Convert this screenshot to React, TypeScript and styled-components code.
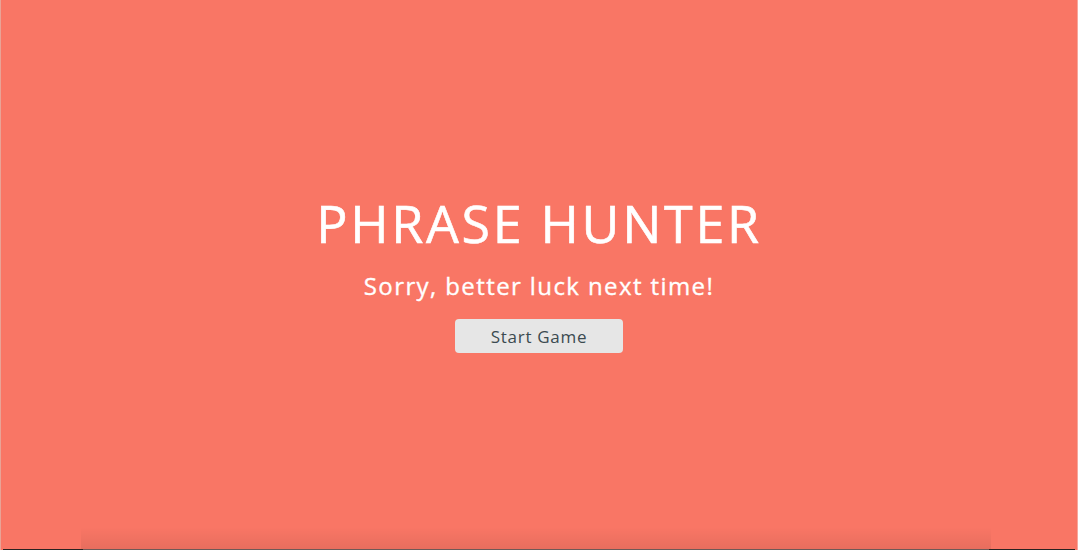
import React from "react";
import styled, { createGlobalStyle } from "styled-components";

const GlobalStyle = createGlobalStyle`
  html, body {
    margin: 0;
    padding: 0;
    height: 100%;
    overflow: hidden;
  }
  #root {
    height: 100%;
  }
`;

const Overlay = styled.div<{ $bg: string }>`
  position: relative;
  box-sizing: border-box;
  height: 100vh;
  width: 100vw;
  background: ${(p) => p.$bg};
  display: flex;
  flex-direction: column;
  align-items: center;
  justify-content: center;
  font-family: "Open Sans", "DejaVu Sans", sans-serif;
  color: #ffffff;
  border-left: 1px solid #e9a396;
  border-right: 1px solid #f7a79c;
  padding-bottom: 5px;
`;

const Title = styled.h2`
  margin: 0 0 6px;
  font-size: 52px;
  font-weight: 400;
  letter-spacing: 2.7px;
  line-height: 1.2;
  -webkit-text-stroke: 0.6px #ffffff;
`;

const Message = styled.h1`
  margin: 10px 0 0;
  font-size: 24px;
  font-weight: 400;
  letter-spacing: 1.4px;
  line-height: 1.3;
  -webkit-text-stroke: 0.35px #ffffff;
`;

const StartButton = styled.button`
  margin-top: 18px;
  width: 168px;
  height: 34px;
  border: none;
  border-radius: 4px;
  background: #e6e6e6;
  color: #3b4a50;
  font-family: "Open Sans", "DejaVu Sans", sans-serif;
  font-size: 17px;
  letter-spacing: 0.7px;
  cursor: pointer;
`;

const BottomShade = styled.div`
  position: absolute;
  left: 80px;
  right: 86px;
  bottom: 0;
  height: 22px;
  background: linear-gradient(to bottom, rgba(0, 0, 0, 0), rgba(0, 0, 0, 0.07));
  border-bottom: 1px solid #6d5a57;
`;

const CornerLine = styled.div<{ $side: "left" | "right" }>`
  position: absolute;
  bottom: 0;
  ${(p) => (p.$side === "left" ? "left: 2px; width: 80px;" : "right: 2px; width: 86px;")}
  height: 1px;
  background: #2a2321;
`;

export default function App() {
  return (
    <>
      <GlobalStyle />
      <Overlay $bg="#f97665">
        <Title>PHRASE HUNTER</Title>
        <Message>Sorry, better luck next time!</Message>
        <StartButton>Start Game</StartButton>
        <BottomShade />
        <CornerLine $side="left" />
        <CornerLine $side="right" />
      </Overlay>
    </>
  );
}
